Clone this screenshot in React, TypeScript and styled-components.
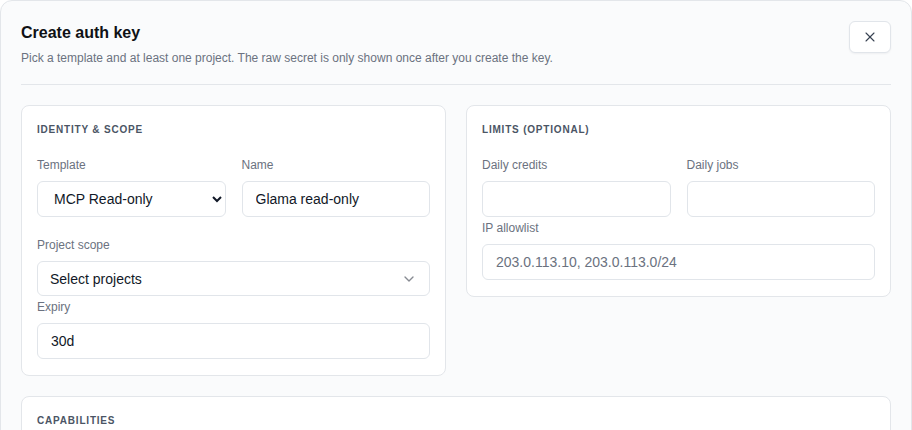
import styled, { createGlobalStyle } from 'styled-components';
import { X, ChevronDown } from 'lucide-react';

const GlobalStyle = createGlobalStyle`
  html, body {
    margin: 0;
    padding: 0;
    background: #ffffff;
  }
  body {
    font-family: "Liberation Sans", Arial, Helvetica, sans-serif;
    color: #111827;
  }
  * {
    box-sizing: border-box;
  }
`;

const Dialog = styled.div`
  width: 912px;
  min-height: 520px;
  background: #fafbfc;
  border: 1px solid #e3e6ea;
  border-radius: 12px;
  padding: 20px;
`;

const Header = styled.div`
  display: flex;
  justify-content: space-between;
  align-items: flex-start;
  padding-bottom: 18px;
  border-bottom: 1px solid #e3e6ea;
  margin-bottom: 20px;
`;

const TitleBlock = styled.div`
  display: flex;
  flex-direction: column;
  gap: 5px;
`;

const Title = styled.h2`
  margin: 0;
  font-size: 16px;
  line-height: 24px;
  font-weight: 700;
  color: #0f1115;
`;

const Subtitle = styled.p`
  margin: 0;
  font-size: 12px;
  line-height: 16px;
  color: #6b7280;
`;

const CloseButton = styled.button`
  width: 42px;
  height: 32px;
  display: flex;
  align-items: center;
  justify-content: center;
  background: #ffffff;
  border: 1px solid #e1e5ea;
  border-radius: 6px;
  box-shadow: 0 1px 2px rgba(15, 23, 42, 0.05);
  color: #374151;
  padding: 0;
  cursor: pointer;
`;

const Grid = styled.div`
  display: grid;
  grid-template-columns: 1fr 1fr;
  gap: 20px;
  align-items: start;
`;

const Card = styled.section<{ $wide?: boolean }>`
  grid-column: ${(p) => (p.$wide ? '1 / -1' : 'auto')};
  background: #ffffff;
  border: 1px solid #e3e6ea;
  border-radius: 8px;
  padding: 17px 15px 16px;
  min-height: ${(p) => (p.$wide ? '120px' : '0')};
`;

const SectionTitle = styled.h3`
  margin: 0 0 20px;
  font-size: 10px;
  line-height: 14px;
  font-weight: 700;
  letter-spacing: 0.08em;
  text-transform: uppercase;
  color: #4b5565;
`;

const Stack = styled.div`
  display: flex;
  flex-direction: column;
  gap: 3px;
`;

const Row = styled.div<{ $spaced?: boolean }>`
  display: grid;
  grid-template-columns: 1fr 1fr;
  gap: 16px;
  margin-bottom: ${(p) => (p.$spaced ? '17px' : '0')};
`;

const Field = styled.label`
  display: flex;
  flex-direction: column;
  gap: 8px;
  min-width: 0;
`;

const Label = styled.span`
  font-size: 12px;
  line-height: 16px;
  color: #6b7280;
`;

const controlBase = `
  width: 100%;
  height: 36px;
  border: 1px solid #e1e5ea;
  border-radius: 6px;
  background: #ffffff;
  font-family: "Liberation Sans", Arial, Helvetica, sans-serif;
  font-size: 14px;
  color: #111827;
  outline: none;
`;

const Input = styled.input`
  ${controlBase}
  padding: 0 13px;
  &::placeholder {
    color: #6b7280;
  }
`;

const NativeSelect = styled.select`
  ${controlBase}
  padding: 0 8px 0 12px;
`;

const SelectTrigger = styled.button`
  ${controlBase}
  height: 35px;
  display: flex;
  align-items: center;
  justify-content: space-between;
  padding: 0 12px;
  text-align: left;
  cursor: pointer;
  svg {
    opacity: 0.5;
  }
`;

export default function App() {
  return (
    <>
      <GlobalStyle />
      <Dialog>
        <Header>
          <TitleBlock>
            <Title>Create auth key</Title>
            <Subtitle>
              Pick a template and at least one project. The raw secret is only shown once after you create the key.
            </Subtitle>
          </TitleBlock>
          <CloseButton aria-label="Close">
            <X size={16} strokeWidth={1.6} />
          </CloseButton>
        </Header>

        <Grid>
          <Card>
            <SectionTitle>Identity &amp; Scope</SectionTitle>
            <Stack>
              <Row $spaced>
                <Field>
                  <Label>Template</Label>
                  <NativeSelect defaultValue="mcp-read">
                    <option value="mcp-read">MCP Read-only</option>
                    <option value="mcp-full">MCP Full access</option>
                    <option value="ci">CI runner</option>
                  </NativeSelect>
                </Field>
                <Field>
                  <Label>Name</Label>
                  <Input defaultValue="Glama read-only" />
                </Field>
              </Row>
              <Field>
                <Label>Project scope</Label>
                <SelectTrigger type="button">
                  <span>Select projects</span>
                  <ChevronDown size={16} />
                </SelectTrigger>
              </Field>
              <Field>
                <Label>Expiry</Label>
                <Input defaultValue="30d" />
              </Field>
            </Stack>
          </Card>

          <Card>
            <SectionTitle>Limits (optional)</SectionTitle>
            <Stack>
              <Row>
                <Field>
                  <Label>Daily credits</Label>
                  <Input />
                </Field>
                <Field>
                  <Label>Daily jobs</Label>
                  <Input />
                </Field>
              </Row>
              <Field>
                <Label>IP allowlist</Label>
                <Input placeholder="203.0.113.10, 203.0.113.0/24" />
              </Field>
            </Stack>
          </Card>

          <Card $wide>
            <SectionTitle>Capabilities</SectionTitle>
          </Card>
        </Grid>
      </Dialog>
    </>
  );
}
